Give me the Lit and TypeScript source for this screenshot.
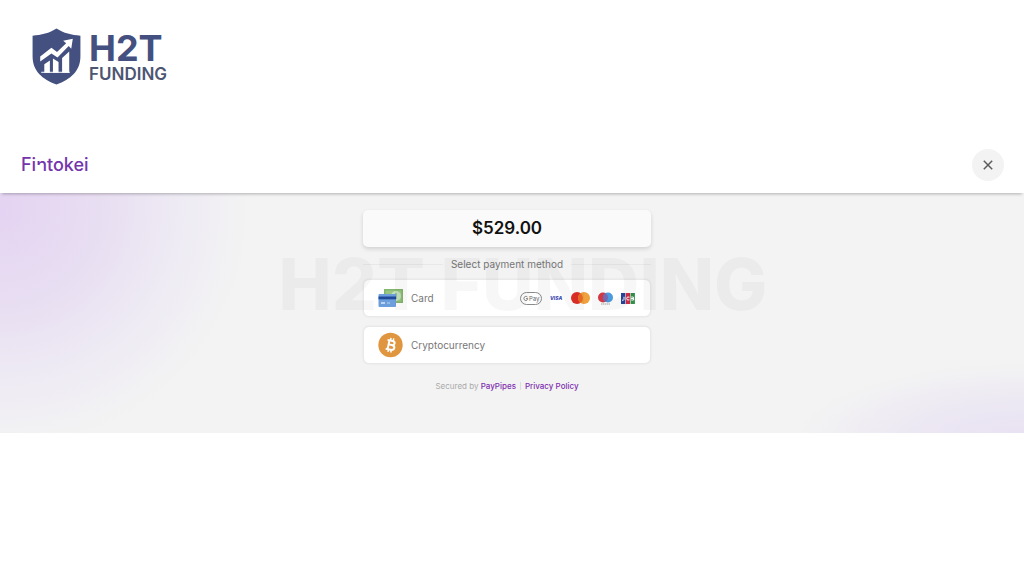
import { LitElement, html, css, svg } from "lit";
import { customElement } from "lit/decorators.js";

const shield = html`
  <svg class="shield" viewBox="0 0 48 56" aria-hidden="true">
    <path fill="#435080" d="M24 0.500C31 5 39 7 47.500 7.500V28C47.500 42 38 50.500 24 55.500C10 50.500 0.500 42 0.500 28V7.500C9 7 17 5 24 0.500Z"/>
    <path fill="#fff" d="M8 33V28L19 19.500L24.500 23.500L33.500 15L30.500 12.500L40 10.500L38.500 20.500L36 17.800L25 29L19 25Z"/>
    <path fill="#fff" d="M12 44V35.500L17.500 32V44ZM20.500 44V30L26 33.500V44ZM29.500 44V29.500L36.500 23V44Z"/>
    <path stroke="#fff" d="M9 43.500H37"/>
  </svg>`;

const closeIcon = html`
  <svg width="10" height="10" viewBox="0 0 10 10" aria-hidden="true">
    <path d="M0.800 0.800L9.200 9.200M9.200 0.800L0.800 9.200" stroke="#5c5c5c" stroke-width="1.500"/>
  </svg>`;

const cardIcon = html`
  <svg width="26" height="20" viewBox="0 0 26 20" aria-hidden="true">
    <rect x="7" y="1" width="19" height="14" fill="#83b56c"/>
    <rect x="8.500" y="2.500" width="16" height="11" fill="#9ac681"/>
    <circle cx="19" cy="8" r="5" fill="#c4dfc0"/>
    <path d="M19 5V11" stroke="#6fa563"/>
    <rect x="1.500" y="6" width="17.500" height="13" rx="1" fill="#6c9edb"/>
    <rect x="1.500" y="8.500" width="17.500" height="2.800" fill="#224a9b"/>
    <rect x="4" y="14" width="4" height="2" fill="#bdd5f2"/>
    <path d="M10 15H13" stroke="#bdd5f2"/>
  </svg>`;

const bitcoinIcon = html`
  <svg width="26" height="26" viewBox="0 0 26 26" aria-hidden="true">
    <circle cx="13.500" cy="13" r="12.200" fill="#e0953f"/>
    <g transform="rotate(12 13 13)" fill="none" stroke="#fff" stroke-width="2">
      <path d="M9.500 8.500H14.700C18 8.500 18 12.700 14.700 12.700H11.500M14.700 12.700C18.900 12.700 18.900 17.500 14.700 17.500H9.500M11.500 8.500V17.500"/>
      <path stroke-width="1.500" d="M12.500 5.800V8.500M15.300 5.800V8.500M12.500 17.500V20.200M15.300 17.500V20.200"/>
    </g>
  </svg>`;

const googlePay = svg`
  <svg width="22" height="13" viewBox="0 0 22 13" role="img" aria-label="Google Pay">
    <rect x="0.500" y="0.500" width="21" height="12" rx="6" fill="#fff" stroke="#8b8b8b"/>
    <path d="M7.400 5C6.200 3.700 3.900 4.500 3.900 6.500C3.900 9.200 7.800 9.100 7.800 6.600H6" fill="none" stroke="#777" stroke-width="0.900"/>
    <text x="9" y="8.700" font-size="6" fill="#666">Pay</text>
  </svg>`;

const visa = svg`
  <svg width="13" height="6" viewBox="0 0 13 6" role="img" aria-label="Visa">
    <text x="0" y="5" font-size="5" font-weight="800" font-style="italic" fill="#3c4ab0">VISA</text>
  </svg>`;

const mastercard = svg`
  <svg width="19" height="12" viewBox="0 0 19 12" role="img" aria-label="Mastercard">
    <circle cx="6" cy="6" r="6" fill="#df2f26"/>
    <circle cx="13" cy="6" r="6" fill="#f0a03c"/>
    <path d="M9.500 1.130A6 6 0 0 1 9.500 10.870A6 6 0 0 1 9.500 1.130Z" fill="#ee6a25"/>
  </svg>`;

const maestro = svg`
  <svg width="15" height="13" viewBox="0 0 15 13" role="img" aria-label="Maestro">
    <circle cx="5" cy="5.500" r="5" fill="#d93a44"/>
    <circle cx="10" cy="5.500" r="5" fill="#4a9be0"/>
    <path d="M7.500 1.170A5 5 0 0 1 7.500 9.830A5 5 0 0 1 7.500 1.170Z" fill="#7769b0"/>
    <path d="M3 12H12" stroke="#a5a5a5" stroke-dasharray="1.500 0.500"/>
  </svg>`;

const jcb = svg`
  <svg width="14" height="11" viewBox="0 0 14 11" role="img" aria-label="JCB">
    <rect width="4.300" height="11" fill="#28469c"/>
    <rect x="4.800" width="4.300" height="11" fill="#cf2f49"/>
    <rect x="9.600" width="4.300" height="11" fill="#32904a"/>
    <path d="M3 3.800V6.500Q3 7.500 1 7.200M8.500 4.200Q5.700 3.200 5.700 5.500T8.500 6.900M10.200 4H12.300V5.500H10.200H12.600V7H10.200" fill="none" stroke="#fff"/>
  </svg>`;

@customElement("app-root")
export class AppRoot extends LitElement {
  static styles = css`
    :host {
      display: block;
      min-height: 100vh;
      background: #fff;
      font-family: Inter, "Liberation Sans", sans-serif;
      font-size: 10px;
      color: #777;
    }
    * {
      box-sizing: border-box;
    }
    svg {
      display: block;
      flex: none;
    }
    .publisher {
      display: flex;
      align-items: center;
      gap: 8px;
      padding: 28px 32px 52px;
      color: #435080;
    }
    .shield {
      width: 49px;
      height: 57px;
    }
    .publisher-name {
      display: grid;
      padding-top: 2px;
      font-size: 36px;
      line-height: 32px;
      font-weight: 700;
    }
    .publisher-sub {
      font-size: 17px;
      line-height: 20px;
      font-weight: 600;
      color: #4c5672;
    }
    .bar {
      position: relative;
      z-index: 1;
      display: flex;
      align-items: center;
      justify-content: space-between;
      padding: 12px 20px;
      background: #fff;
      box-shadow: 0 3px 3px -2px rgba(0, 0, 0, 0.28);
    }
    .brand {
      padding-left: 1px;
      font-size: 18px;
      line-height: 32px;
      font-weight: 500;
      color: #7535ad;
      text-decoration: none;
    }
    .cut {
      display: inline-block;
      clip-path: polygon(0 0, 100% 0, 100% 100%, 50% 100%, 50% 50%, 0 50%);
    }
    .close {
      display: grid;
      place-items: center;
      width: 32px;
      height: 32px;
      padding: 0;
      border: 0;
      border-radius: 50%;
      background: #f3f3f3;
      cursor: pointer;
    }
    .stage {
      position: relative;
      padding: 17px 20px 40px 10px;
      background:
        radial-gradient(ellipse 250px 240px at 0 16px, #e4d3f2, #e8def2 40%, #eeebf4 72%, rgba(243, 243, 243, 0)),
        radial-gradient(ellipse 230px 80px at 100% 104%, #e8e0f2, #ece8f3 50%, rgba(243, 243, 243, 0)),
        #f3f3f3;
    }
    .checkout {
      display: grid;
      width: 100%;
      max-width: 288px;
      margin: 0 auto;
    }
    .amount {
      margin: 0;
      border-radius: 5px;
      background: #fafafa;
      box-shadow: 0 2px 4px rgba(0, 0, 0, 0.14);
      color: #111;
      font-size: 17px;
      line-height: 37px;
      font-weight: 600;
      text-align: center;
    }
    .divider {
      display: flex;
      align-items: center;
      gap: 8px;
      margin: 0;
      padding: 9px 0 7px;
      font-size: 10px;
      line-height: 16px;
      font-weight: 400;
    }
    .divider::before,
    .divider::after {
      content: "";
      flex: 1;
      height: 1px;
      background: #e8e8e8;
    }
    .methods {
      display: grid;
      gap: 9px;
    }
    .method {
      display: flex;
      align-items: center;
      gap: 8px;
      width: 100%;
      height: 38px;
      padding: 0 15px 0 13px;
      border: 1px solid #e9e9e9;
      border-radius: 6px;
      background: #fff;
      box-shadow: 0 0 2px rgba(0, 0, 0, 0.08);
      font: inherit;
      color: inherit;
      cursor: pointer;
    }
    .schemes {
      display: flex;
      align-items: center;
      gap: 8px;
      margin-left: auto;
    }
    .footer {
      display: flex;
      justify-content: center;
      gap: 4px;
      padding-top: 15px;
      font-size: 8px;
      line-height: 14px;
      color: #aaa;
    }
    .footer a {
      color: #7f2fb0;
      font-weight: 500;
      text-decoration: none;
    }
    .rule {
      width: 1px;
      margin: 3px 0;
      background: #ddd;
    }
    .watermark {
      position: absolute;
      inset: 0 0 58px 22px;
      display: grid;
      place-items: center;
      font-size: 71px;
      font-weight: 800;
      white-space: nowrap;
      color: rgba(0, 0, 0, 0.03);
      pointer-events: none;
    }
  `;

  render() {
    return html`
      <header class="publisher">
        ${shield}
        <div class="publisher-name">H2T<span class="publisher-sub">FUNDING</span></div>
      </header>
      <nav class="bar">
        <a class="brand" href="#" aria-label="Fintokei">Fi<span class="cut">n</span>tokei</a>
        <button class="close" type="button" aria-label="Close">${closeIcon}</button>
      </nav>
      <main class="stage">
        <section class="checkout">
          <h1 class="amount">$529.00</h1>
          <h2 class="divider">Select payment method</h2>
          <div class="methods">
            <button class="method" type="button">
              ${cardIcon}<span>Card</span>
              <span class="schemes">${googlePay}${visa}${mastercard}${maestro}${jcb}</span>
            </button>
            <button class="method" type="button">
              ${bitcoinIcon}<span>Cryptocurrency</span>
            </button>
          </div>
          <footer class="footer">
            <span>Secured by <a href="#">PayPipes</a></span>
            <span class="rule"></span>
            <a href="#">Privacy Policy</a>
          </footer>
        </section>
        <div class="watermark" aria-hidden="true">H2T FUNDING</div>
      </main>
    `;
  }
}
